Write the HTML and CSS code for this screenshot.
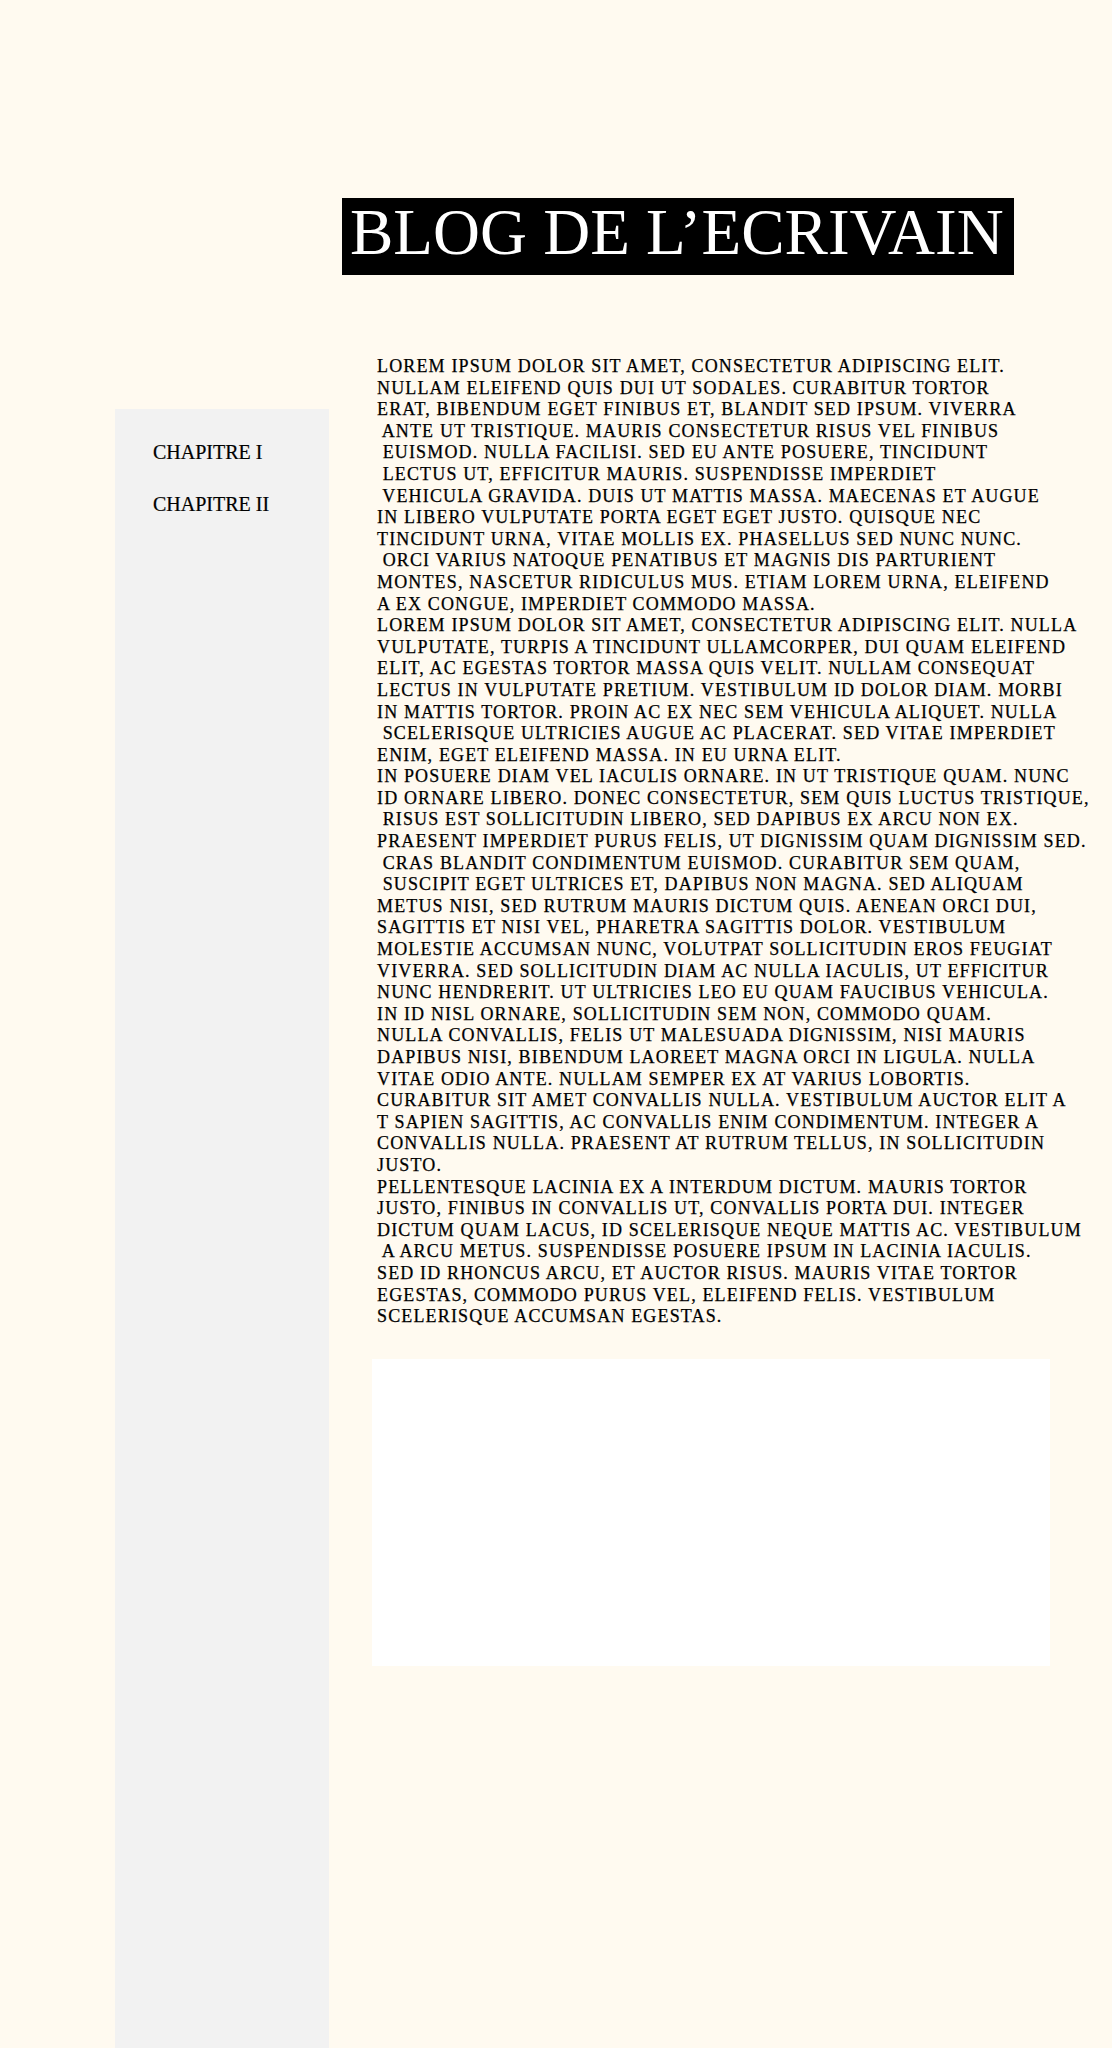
FILE: index.html
```html
<!DOCTYPE html>
<html lang="fr">
<head>
<meta charset="utf-8">
<title>Blog de l'écrivain</title>
<link rel="stylesheet" href="styles.css">
</head>
<body>
<header class="site-header">
  <h1 class="site-title">BLOG DE L’ECRIVAIN</h1>
</header>
<div class="layout">
  <nav class="sidebar">
    <a class="chapter" href="#">CHAPITRE I</a>
    <a class="chapter" href="#">CHAPITRE II</a>
  </nav>
  <main class="content">
    <article class="text">
<p>LOREM IPSUM DOLOR SIT AMET, CONSECTETUR ADIPISCING ELIT.
NULLAM ELEIFEND QUIS DUI UT SODALES. CURABITUR TORTOR
ERAT, BIBENDUM EGET FINIBUS ET, BLANDIT SED IPSUM. VIVERRA
 ANTE UT TRISTIQUE. MAURIS CONSECTETUR RISUS VEL FINIBUS
 EUISMOD. NULLA FACILISI. SED EU ANTE POSUERE, TINCIDUNT
 LECTUS UT, EFFICITUR MAURIS. SUSPENDISSE IMPERDIET
 VEHICULA GRAVIDA. DUIS UT MATTIS MASSA. MAECENAS ET AUGUE
IN LIBERO VULPUTATE PORTA EGET EGET JUSTO. QUISQUE NEC
TINCIDUNT URNA, VITAE MOLLIS EX. PHASELLUS SED NUNC NUNC.
 ORCI VARIUS NATOQUE PENATIBUS ET MAGNIS DIS PARTURIENT
MONTES, NASCETUR RIDICULUS MUS. ETIAM LOREM URNA, ELEIFEND
A EX CONGUE, IMPERDIET COMMODO MASSA.</p>
<p>LOREM IPSUM DOLOR SIT AMET, CONSECTETUR ADIPISCING ELIT. NULLA
VULPUTATE, TURPIS A TINCIDUNT ULLAMCORPER, DUI QUAM ELEIFEND
ELIT, AC EGESTAS TORTOR MASSA QUIS VELIT. NULLAM CONSEQUAT
LECTUS IN VULPUTATE PRETIUM. VESTIBULUM ID DOLOR DIAM. MORBI
IN MATTIS TORTOR. PROIN AC EX NEC SEM VEHICULA ALIQUET. NULLA
 SCELERISQUE ULTRICIES AUGUE AC PLACERAT. SED VITAE IMPERDIET
ENIM, EGET ELEIFEND MASSA. IN EU URNA ELIT.</p>
<p>IN POSUERE DIAM VEL IACULIS ORNARE. IN UT TRISTIQUE QUAM. NUNC
ID ORNARE LIBERO. DONEC CONSECTETUR, SEM QUIS LUCTUS TRISTIQUE,
 RISUS EST SOLLICITUDIN LIBERO, SED DAPIBUS EX ARCU NON EX.
PRAESENT IMPERDIET PURUS FELIS, UT DIGNISSIM QUAM DIGNISSIM SED.
 CRAS BLANDIT CONDIMENTUM EUISMOD. CURABITUR SEM QUAM,
 SUSCIPIT EGET ULTRICES ET, DAPIBUS NON MAGNA. SED ALIQUAM
METUS NISI, SED RUTRUM MAURIS DICTUM QUIS. AENEAN ORCI DUI,
SAGITTIS ET NISI VEL, PHARETRA SAGITTIS DOLOR. VESTIBULUM
MOLESTIE ACCUMSAN NUNC, VOLUTPAT SOLLICITUDIN EROS FEUGIAT
VIVERRA. SED SOLLICITUDIN DIAM AC NULLA IACULIS, UT EFFICITUR
NUNC HENDRERIT. UT ULTRICIES LEO EU QUAM FAUCIBUS VEHICULA.
IN ID NISL ORNARE, SOLLICITUDIN SEM NON, COMMODO QUAM.
NULLA CONVALLIS, FELIS UT MALESUADA DIGNISSIM, NISI MAURIS
DAPIBUS NISI, BIBENDUM LAOREET MAGNA ORCI IN LIGULA. NULLA
VITAE ODIO ANTE. NULLAM SEMPER EX AT VARIUS LOBORTIS.
CURABITUR SIT AMET CONVALLIS NULLA. VESTIBULUM AUCTOR ELIT A
T SAPIEN SAGITTIS, AC CONVALLIS ENIM CONDIMENTUM. INTEGER A
CONVALLIS NULLA. PRAESENT AT RUTRUM TELLUS, IN SOLLICITUDIN
JUSTO.</p>
<p>PELLENTESQUE LACINIA EX A INTERDUM DICTUM. MAURIS TORTOR
JUSTO, FINIBUS IN CONVALLIS UT, CONVALLIS PORTA DUI. INTEGER
DICTUM QUAM LACUS, ID SCELERISQUE NEQUE MATTIS AC. VESTIBULUM
 A ARCU METUS. SUSPENDISSE POSUERE IPSUM IN LACINIA IACULIS.
SED ID RHONCUS ARCU, ET AUCTOR RISUS. MAURIS VITAE TORTOR
EGESTAS, COMMODO PURUS VEL, ELEIFEND FELIS. VESTIBULUM
SCELERISQUE ACCUMSAN EGESTAS.</p>
    </article>
    <div class="media-frame"></div>
  </main>
</div>
</body>
</html>
```
FILE: styles.css
```css
html, body {
  margin: 0;
  padding: 0;
}

body {
  background: #fffaf0;
  color: #000;
  font-family: "Liberation Serif", "Times New Roman", serif;
  width: 1112px;
  height: 2048px;
  overflow: hidden;
}

.site-header {
  padding: 198px 0 0 342px;
}

.site-title {
  display: inline-block;
  margin: 0;
  padding: 0 10px 9px 8px;
  background: #000;
  color: #fff;
  font-family: "Liberation Serif", "Times New Roman", serif;
  font-weight: normal;
  font-size: 65px;
  line-height: 68px;
}

.layout {
  display: flex;
  align-items: flex-start;
  padding-left: 115px;
  margin-top: 81px;
  gap: 43px;
}

.sidebar {
  flex: 0 0 214px;
  box-sizing: border-box;
  margin-top: 53px;
  height: 1639px;
  background: #f2f2f2;
  padding: 32px 0 0 38px;
  display: flex;
  flex-direction: column;
  gap: 29px;
}

.chapter {
  color: #000;
  text-decoration: none;
  font-size: 20px;
  line-height: 23px;
  -webkit-text-stroke: 0.2px #000;
}

.content {
  flex: 1 1 auto;
}

.text {
  padding-left: 5px;
  font-size: 18px;
  line-height: 21.6px;
  letter-spacing: 1.15px;
  -webkit-text-stroke: 0.25px #000;
}

.text p {
  margin: 0;
  white-space: pre;
}

.media-frame {
  margin-top: 31px;
  width: 678px;
  height: 307px;
  background: #fff;
}
```
